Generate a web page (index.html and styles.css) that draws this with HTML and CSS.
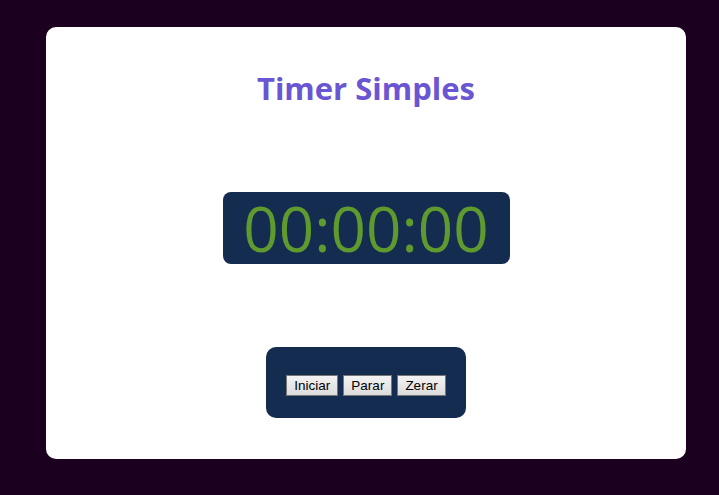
FILE: index.html
```html
<!DOCTYPE html>
<html lang="pt">
<head>
<meta charset="utf-8">
<title>Timer Simples</title>
<link rel="stylesheet" href="styles.css">
</head>
<body>
<main class="card">
  <h1 class="title">Timer Simples</h1>
  <div class="display">00:00:00</div>
  <div class="controls">
    <button class="btn">Iniciar</button>
    <button class="btn">Parar</button>
    <button class="btn">Zerar</button>
  </div>
</main>
</body>
</html>
```
FILE: styles.css
```css
html, body {
  margin: 0;
  padding: 0;
  height: 100%;
}
body {
  background: #1b0020;
  font-family: "Open Sans", "Noto Sans", sans-serif;
  padding: 27px 33px 0 46px;
  box-sizing: border-box;
}
.card {
  width: 640px;
  height: 432px;
  background: #ffffff;
  border-radius: 10px;
  display: flex;
  flex-direction: column;
  align-items: center;
  box-sizing: border-box;
  padding-top: 40px;
}
.title {
  margin: 0;
  font-size: 31px;
  font-weight: 700;
  line-height: 42px;
  color: #6a55d2;
}
.display {
  margin-top: 83px;
  width: 287px;
  height: 72px;
  background: #152c51;
  border-radius: 8px;
  color: #5f9a2e;
  font-size: 62px;
  line-height: 72px;
  text-align: center;
  box-sizing: border-box;
}
.controls {
  margin-top: 83px;
  background: #152c51;
  border-radius: 10px;
  padding: 28px 20px 22px;
  display: flex;
  gap: 5px;
}
.btn {
  font-family: "Liberation Sans", Arial, sans-serif;
  font-size: 13.5px;
  color: #000;
  background: linear-gradient(#f3f3f3, #dcdcdc);
  border: 1px solid #767676;
  padding: 1px 7px;
  height: 21px;
  line-height: 17px;
  border-radius: 0;
}
```
